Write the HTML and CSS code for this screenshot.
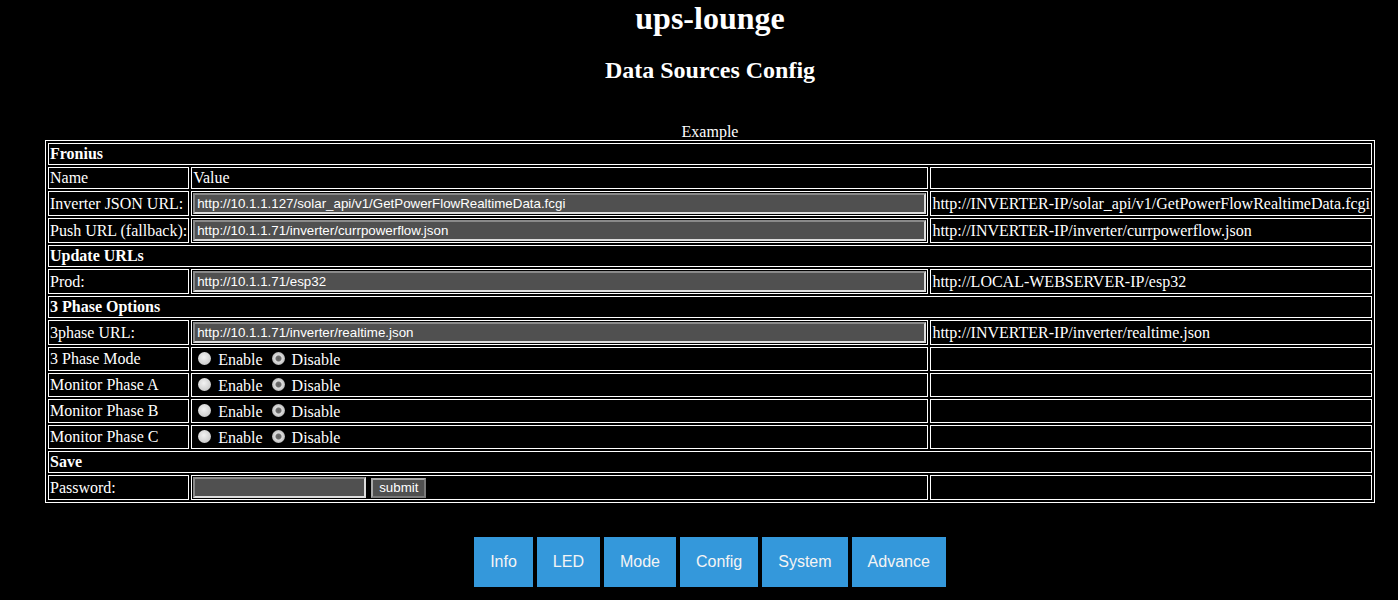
FILE: index.html
```html
<!DOCTYPE html>
<html>
<head>
<meta charset="utf-8">
<title>ups-lounge</title>
<link rel="stylesheet" href="styles.css">
</head>
<body>
<h1 class="title">ups-lounge</h1>
<h2 class="subtitle">Data Sources Config</h2>
<form class="cfg-form">
<table class="cfg">
<caption class="cap">Example</caption>
<tr><td class="sect" colspan="3">Fronius</td></tr>
<tr><td class="lbl">Name</td><td class="val">Value</td><td class="ex"></td></tr>
<tr><td class="lbl">Inverter JSON URL:</td><td class="val"><input class="txt" type="text" value="http://10.1.1.127/solar_api/v1/GetPowerFlowRealtimeData.fcgi"></td><td class="ex">http://INVERTER-IP/solar_api/v1/GetPowerFlowRealtimeData.fcgi</td></tr>
<tr><td class="lbl">Push URL (fallback):</td><td class="val"><input class="txt" type="text" value="http://10.1.1.71/inverter/currpowerflow.json"></td><td class="ex">http://INVERTER-IP/inverter/currpowerflow.json</td></tr>
<tr><td class="sect" colspan="3">Update URLs</td></tr>
<tr><td class="lbl">Prod:</td><td class="val"><input class="txt" type="text" value="http://10.1.1.71/esp32"></td><td class="ex">http://LOCAL-WEBSERVER-IP/esp32</td></tr>
<tr><td class="sect" colspan="3">3 Phase Options</td></tr>
<tr><td class="lbl">3phase URL:</td><td class="val"><input class="txt" type="text" value="http://10.1.1.71/inverter/realtime.json"></td><td class="ex">http://INVERTER-IP/inverter/realtime.json</td></tr>
<tr><td class="lbl">3 Phase Mode</td><td class="val"><input class="rad" type="radio" name="m3"> Enable <input class="rad" type="radio" name="m3" checked> Disable</td><td class="ex"></td></tr>
<tr><td class="lbl">Monitor Phase A</td><td class="val"><input class="rad" type="radio" name="pa"> Enable <input class="rad" type="radio" name="pa" checked> Disable</td><td class="ex"></td></tr>
<tr><td class="lbl">Monitor Phase B</td><td class="val"><input class="rad" type="radio" name="pb"> Enable <input class="rad" type="radio" name="pb" checked> Disable</td><td class="ex"></td></tr>
<tr><td class="lbl">Monitor Phase C</td><td class="val"><input class="rad" type="radio" name="pc"> Enable <input class="rad" type="radio" name="pc" checked> Disable</td><td class="ex"></td></tr>
<tr><td class="sect" colspan="3">Save</td></tr>
<tr><td class="lbl">Password:</td><td class="val"><input class="pw" type="password"> <input class="btn" type="submit" value="submit"></td><td class="ex"></td></tr>
</table>
</form>
<nav class="nav">
<a class="nav-btn" href="#">Info</a>
<a class="nav-btn" href="#">LED</a>
<a class="nav-btn" href="#">Mode</a>
<a class="nav-btn" href="#">Config</a>
<a class="nav-btn" href="#">System</a>
<a class="nav-btn" href="#">Advance</a>
</nav>
</body>
</html>
```
FILE: styles.css
```css
html, body {
  background: #000;
}
body {
  margin: 0 23px 8px 45px;
  color: #fff;
  font-family: "Liberation Serif", "Times New Roman", serif;
  font-size: 16px;
}
.title {
  margin: 0;
  text-align: center;
  font-size: 32px;
  font-weight: bold;
}
.subtitle {
  margin: 20px 0 39px;
  text-align: center;
  font-size: 24px;
  font-weight: bold;
}
.cfg-form {
  margin: 0;
}
.cfg {
  width: 100%;
  border: 1px solid #fff;
  border-spacing: 2px;
}
.cap {
  text-align: center;
  line-height: 17px;
}
.cfg td {
  border: 1px solid #fff;
  padding: 1px;
  white-space: nowrap;
}
.cfg td.sect {
  font-weight: bold;
}
.cfg td.val {
  width: 100%;
}
.txt {
  display: block;
  box-sizing: border-box;
  width: 100%;
  height: 21px;
  margin: 0;
  padding: 1px 2px;
  background: #505050;
  color: #fff;
  font-family: "Liberation Sans", Arial, sans-serif;
  font-size: 13.33px;
  border: 2px solid;
  border-color: #8a8a8a #dcdcdc #dcdcdc #8a8a8a;
}
.pw {
  box-sizing: border-box;
  width: 173px;
  height: 21px;
  margin: 0;
  padding: 1px 2px;
  background: #505050;
  color: #fff;
  font-family: "Liberation Sans", Arial, sans-serif;
  font-size: 13.33px;
  border: 2px solid;
  border-color: #8a8a8a #dcdcdc #dcdcdc #8a8a8a;
  vertical-align: middle;
}
.btn {
  box-sizing: border-box;
  height: 20px;
  margin: 0 0 0 1px;
  padding: 0 6px;
  background: #505050;
  color: #fff;
  font-family: "Liberation Sans", Arial, sans-serif;
  font-size: 13.33px;
  border: 2px solid;
  border-color: #a8a8a8 #7a7a7a #7a7a7a #a8a8a8;
  vertical-align: middle;
}
.rad {
  -webkit-appearance: none;
  appearance: none;
  width: 13px;
  height: 13px;
  margin: 3px 3px 0 5px;
  border-radius: 50%;
  background: radial-gradient(circle at 45% 40%, #f2f2f2 0, #d6d6d6 55%, #b8b8b8 100%);
  border: 0;
  vertical-align: baseline;
}
.rad:checked {
  background: radial-gradient(circle at 50% 50%, #5e5e5e 0, #6e6e6e 2.5px, #dcdcdc 3.5px, #d0d0d0 5px, #b4b4b4 6.5px);
}
.nav {
  display: flex;
  justify-content: center;
  gap: 4px;
  margin-top: 34px;
}
.nav-btn {
  display: block;
  height: 50px;
  line-height: 50px;
  padding: 0 16px;
  background: #3498db;
  color: #f4f4f4;
  font-family: "Liberation Sans", Arial, sans-serif;
  font-size: 16px;
  text-decoration: none;
}
```
